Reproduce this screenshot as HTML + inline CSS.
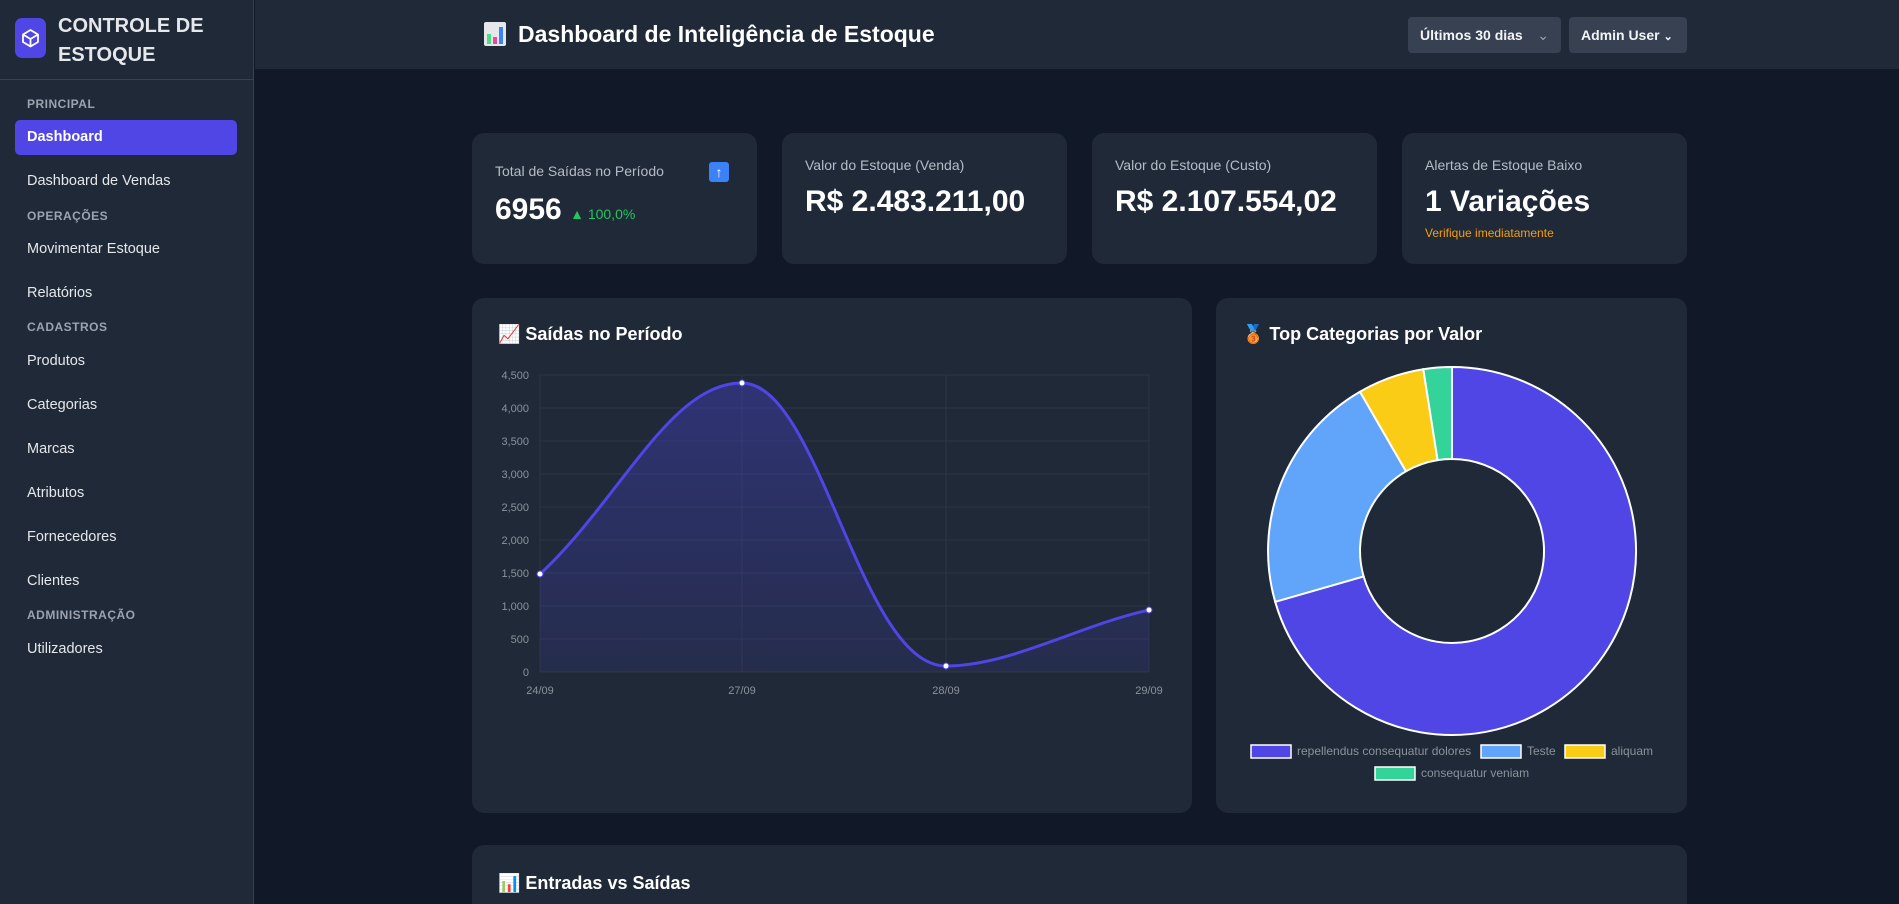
<!DOCTYPE html>
<html><head><meta charset="utf-8"><style>
*{box-sizing:border-box;margin:0;padding:0}
html,body{width:1899px;height:904px;overflow:hidden}
body{background:#111827;font-family:"Liberation Sans",sans-serif;color:#fff;position:relative}
.sb{position:absolute;left:0;top:0;width:254px;height:904px;background:#1f2937;border-right:1px solid #374151}
.logo{position:absolute;left:15px;top:18px;width:31px;height:40px;background:#4f46e5;border-radius:7px}
.brand{position:absolute;left:58px;top:12px;font-size:20px;line-height:29px;font-weight:600;color:#e5e7eb}
.div{position:absolute;left:0;top:79px;width:254px;border-top:1px solid #374151}
.sec{position:absolute;left:27px;font-size:12px;font-weight:700;color:#9ca3af;letter-spacing:.5px}
.it{position:absolute;left:27px;font-size:14.5px;color:#e5e7eb}
.act{position:absolute;left:15px;top:120px;width:222px;height:35px;background:#4f46e5;border-radius:5px}
.hd{position:absolute;left:255px;top:0;width:1644px;height:69px;background:#1f2937}
.card{position:absolute;background:#1f2937;border-radius:12px}
.lab{position:absolute;left:23px;top:30px;font-size:14px;color:#b6bcc6}
.val{position:absolute;left:23px;top:52px;font-size:30px;font-weight:600}
.dd{position:absolute;top:17px;height:36px;background:#374151;border-radius:4px;font-size:14px;font-weight:600;padding:10px 12px;color:#f3f4f6}
.ct{position:absolute;font-size:18px;font-weight:600}
</style></head><body>
<div class="sb">
<div class="logo"><svg width="31" height="40" viewBox="0 0 31 40"><path d="M15.5 12 L23 16.5 V24 L15.5 28.5 L8 24 V16.5 Z M8 16.5 L15.5 21 L23 16.5 M15.5 21 V28.5" fill="none" stroke="#fff" stroke-width="1.8" stroke-linejoin="round"/></svg></div>
<div class="brand">CONTROLE DE<br>ESTOQUE</div>
<div class="div"></div>
<div class="sec" style="top:97px">PRINCIPAL</div>
<div class="act"></div>
<div class="it" style="top:129px;font-weight:600;color:#fff">Dashboard</div>
<div class="it" style="top:173px">Dashboard de Vendas</div>
<div class="sec" style="top:209px">OPERAÇÕES</div>
<div class="it" style="top:241px">Movimentar Estoque</div>
<div class="it" style="top:285px">Relatórios</div>
<div class="sec" style="top:320px">CADASTROS</div>
<div class="it" style="top:353px">Produtos</div>
<div class="it" style="top:397px">Categorias</div>
<div class="it" style="top:441px">Marcas</div>
<div class="it" style="top:485px">Atributos</div>
<div class="it" style="top:529px">Fornecedores</div>
<div class="it" style="top:573px">Clientes</div>
<div class="sec" style="top:608px">ADMINISTRAÇÃO</div>
<div class="it" style="top:641px">Utilizadores</div>
</div>
<div class="hd"></div>
<svg style="position:absolute;left:484px;top:22px" width="22" height="24"><rect x="0" y="0" width="22" height="24" rx="2" fill="#e5e7eb"/><rect x="3" y="12" width="4" height="10" fill="#4ade80"/><rect x="9" y="15" width="4" height="7" fill="#ec4899"/><rect x="15" y="5" width="4" height="17" fill="#3b82f6"/></svg>
<div style="position:absolute;left:518px;top:21px;font-size:23px;font-weight:600">Dashboard de Inteligência de Estoque</div>
<div class="dd" style="left:1408px;width:153px">Últimos 30 dias <span style="position:absolute;right:12px;color:#9ca3af;font-weight:400">⌄</span></div>
<div class="dd" style="left:1569px;width:118px">Admin User <span style="font-size:11px">⌄</span></div>

<div class="card" style="left:472px;top:133px;width:285px;height:131px">
<div class="lab" style="top:30px">Total de Saídas no Período</div>
<div style="position:absolute;left:237px;top:29px;width:20px;height:20px;background:#3b82f6;border-radius:3px;color:#fff;font-size:14px;text-align:center;line-height:20px;font-weight:700">↑</div>
<div class="val" style="top:60px">6956 <span style="font-size:14px;color:#22c55e;font-weight:500">▲ 100,0%</span></div></div>
<div class="card" style="left:782px;top:133px;width:285px;height:131px"><div class="lab" style="top:24px">Valor do Estoque (Venda)</div><div class="val">R$ 2.483.211,00</div></div>
<div class="card" style="left:1092px;top:133px;width:285px;height:131px"><div class="lab" style="top:24px">Valor do Estoque (Custo)</div><div class="val">R$ 2.107.554,02</div></div>
<div class="card" style="left:1402px;top:133px;width:285px;height:131px"><div class="lab" style="top:24px">Alertas de Estoque Baixo</div><div class="val">1 Variações</div><div style="position:absolute;left:23px;top:93px;font-size:12px;color:#f59e0b">Verifique imediatamente</div></div>

<div class="card" style="left:472px;top:298px;width:720px;height:515px"></div>
<div class="ct" style="left:498px;top:324px">📈 Saídas no Período</div>
<div class="card" style="left:1216px;top:298px;width:471px;height:515px"></div>
<div class="ct" style="left:1242px;top:324px">🥉 Top Categorias por Valor</div>
<div class="card" style="left:472px;top:845px;width:1215px;height:59px;border-radius:12px 12px 0 0"></div>
<div class="ct" style="left:498px;top:873px">📊 Entradas vs Saídas</div>

<svg style="position:absolute;left:0;top:0" width="1899" height="904">
<defs><linearGradient id="g" x1="0" y1="0" x2="0" y2="1"><stop offset="0" stop-color="#4f46e5" stop-opacity=".35"/><stop offset="1" stop-color="#4f46e5" stop-opacity=".12"/></linearGradient></defs>
<g stroke="#2c3544" stroke-width="1">
<line x1="540" y1="375" x2="1149" y2="375"/><line x1="540" y1="408" x2="1149" y2="408"/><line x1="540" y1="441" x2="1149" y2="441"/><line x1="540" y1="474" x2="1149" y2="474"/><line x1="540" y1="507" x2="1149" y2="507"/><line x1="540" y1="540" x2="1149" y2="540"/><line x1="540" y1="573" x2="1149" y2="573"/><line x1="540" y1="606" x2="1149" y2="606"/><line x1="540" y1="639" x2="1149" y2="639"/><line x1="540" y1="672" x2="1149" y2="672"/>
<line x1="540" y1="375" x2="540" y2="672"/><line x1="742" y1="375" x2="742" y2="672"/><line x1="946" y1="375" x2="946" y2="672"/><line x1="1149" y1="375" x2="1149" y2="672"/>
</g>
<g fill="#8b929c" font-size="11" font-family="Liberation Sans" text-anchor="end">
<text x="529" y="379">4,500</text><text x="529" y="412">4,000</text><text x="529" y="445">3,500</text><text x="529" y="478">3,000</text><text x="529" y="511">2,500</text><text x="529" y="544">2,000</text><text x="529" y="577">1,500</text><text x="529" y="610">1,000</text><text x="529" y="643">500</text><text x="529" y="676">0</text>
</g>
<g fill="#8b929c" font-size="11" font-family="Liberation Sans" text-anchor="middle"><text x="540" y="694">24/09</text><text x="742" y="694">27/09</text><text x="946" y="694">28/09</text><text x="1149" y="694">29/09</text></g>
<path d="M540,574 C620,500 670,383 742,383 C820,383 860,666 946,666 C1010,666 1080,625 1149,610 L1149,672 L540,672 Z" fill="url(#g)"/>
<path d="M540,574 C620,500 670,383 742,383 C820,383 860,666 946,666 C1010,666 1080,625 1149,610" fill="none" stroke="#4f46e5" stroke-width="3"/>
<g fill="#fff" stroke="#4f46e5"><circle cx="540" cy="574" r="3"/><circle cx="742" cy="383" r="3"/><circle cx="946" cy="666" r="3"/><circle cx="1149" cy="610" r="3"/></g>
<g stroke="#fff" stroke-width="2">
<path d="M1452,367 A184 184 0 1 1 1275.2,601.8 L1363.6,576.4 A92 92 0 1 0 1452,459 Z" fill="#4f46e5"/>
<path d="M1275.2,601.8 A184 184 0 0 1 1360,391.7 L1406,471.3 A92 92 0 0 0 1363.6,576.4 Z" fill="#60a5fa"/>
<path d="M1360,391.7 A184 184 0 0 1 1423.3,369.2 L1437.6,460.1 A92 92 0 0 0 1406,471.3 Z" fill="#facc15"/>
<path d="M1423.3,369.2 A184 184 0 0 1 1452,367 L1452,459 A92 92 0 0 0 1437.6,460.1 Z" fill="#34d399"/>
</g>
<g stroke="#fff" stroke-width="1.5" font-family="Liberation Sans" font-size="12">
<rect x="1251" y="745" width="40" height="13" fill="#4f46e5"/><text x="1297" y="755" fill="#8b929c" stroke="none">repellendus consequatur dolores</text>
<rect x="1481" y="745" width="40" height="13" fill="#60a5fa"/><text x="1527" y="755" fill="#8b929c" stroke="none">Teste</text>
<rect x="1565" y="745" width="40" height="13" fill="#facc15"/><text x="1611" y="755" fill="#8b929c" stroke="none">aliquam</text>
<rect x="1375" y="767" width="40" height="13" fill="#34d399"/><text x="1421" y="777" fill="#8b929c" stroke="none">consequatur veniam</text>
</g>
</svg>
</body></html>
